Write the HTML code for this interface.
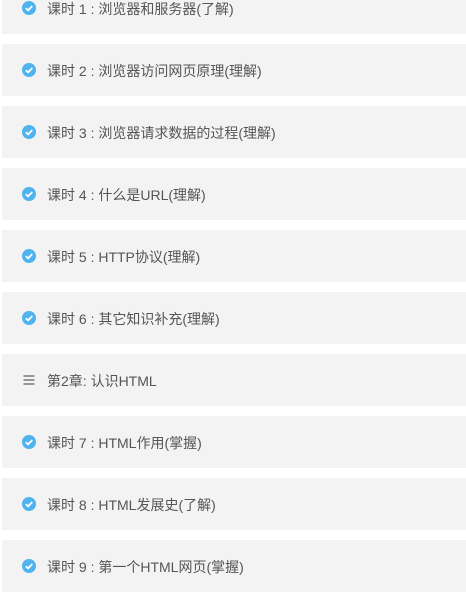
<!DOCTYPE html>
<html><head><meta charset="utf-8"><style>
body{margin:0;width:466px;height:593px;overflow:hidden;background:#fff;font-family:"Liberation Sans","Noto Sans CJK SC",sans-serif;position:relative}
.r{position:absolute;left:2px;width:464px;height:52px;background:#f3f3f3;}
.r svg{position:absolute;left:20px;top:19px}
.r span{position:absolute;left:45px;top:1px;line-height:52px;font-size:14px;color:#555}
</style></head><body>
<div class="r" style="top:-18px"><svg width="14" height="14"><circle cx="7" cy="7" r="7" fill="#4fb3f0"/><path d="M3.8 7.2l2.3 2.2 4.2-4.4" stroke="#fff" stroke-width="1.8" fill="none"/></svg><span>课时 1 : 浏览器和服务器(了解)</span></div>
<div class="r" style="top:44px"><svg width="14" height="14"><circle cx="7" cy="7" r="7" fill="#4fb3f0"/><path d="M3.8 7.2l2.3 2.2 4.2-4.4" stroke="#fff" stroke-width="1.8" fill="none"/></svg><span>课时 2 : 浏览器访问网页原理(理解)</span></div>
<div class="r" style="top:106px"><svg width="14" height="14"><circle cx="7" cy="7" r="7" fill="#4fb3f0"/><path d="M3.8 7.2l2.3 2.2 4.2-4.4" stroke="#fff" stroke-width="1.8" fill="none"/></svg><span>课时 3 : 浏览器请求数据的过程(理解)</span></div>
<div class="r" style="top:168px"><svg width="14" height="14"><circle cx="7" cy="7" r="7" fill="#4fb3f0"/><path d="M3.8 7.2l2.3 2.2 4.2-4.4" stroke="#fff" stroke-width="1.8" fill="none"/></svg><span>课时 4 : 什么是URL(理解)</span></div>
<div class="r" style="top:230px"><svg width="14" height="14"><circle cx="7" cy="7" r="7" fill="#4fb3f0"/><path d="M3.8 7.2l2.3 2.2 4.2-4.4" stroke="#fff" stroke-width="1.8" fill="none"/></svg><span>课时 5 : HTTP协议(理解)</span></div>
<div class="r" style="top:292px"><svg width="14" height="14"><circle cx="7" cy="7" r="7" fill="#4fb3f0"/><path d="M3.8 7.2l2.3 2.2 4.2-4.4" stroke="#fff" stroke-width="1.8" fill="none"/></svg><span>课时 6 : 其它知识补充(理解)</span></div>
<div class="r" style="top:354px"><svg width="14" height="14"><path d="M1.5 3h11M1.5 7h11M1.5 11h11" stroke="#777" stroke-width="1.4"/></svg><span>第2章: 认识HTML</span></div>
<div class="r" style="top:416px"><svg width="14" height="14"><circle cx="7" cy="7" r="7" fill="#4fb3f0"/><path d="M3.8 7.2l2.3 2.2 4.2-4.4" stroke="#fff" stroke-width="1.8" fill="none"/></svg><span>课时 7 : HTML作用(掌握)</span></div>
<div class="r" style="top:478px"><svg width="14" height="14"><circle cx="7" cy="7" r="7" fill="#4fb3f0"/><path d="M3.8 7.2l2.3 2.2 4.2-4.4" stroke="#fff" stroke-width="1.8" fill="none"/></svg><span>课时 8 : HTML发展史(了解)</span></div>
<div class="r" style="top:540px"><svg width="14" height="14"><circle cx="7" cy="7" r="7" fill="#4fb3f0"/><path d="M3.8 7.2l2.3 2.2 4.2-4.4" stroke="#fff" stroke-width="1.8" fill="none"/></svg><span>课时 9 : 第一个HTML网页(掌握)</span></div>
</body></html>
